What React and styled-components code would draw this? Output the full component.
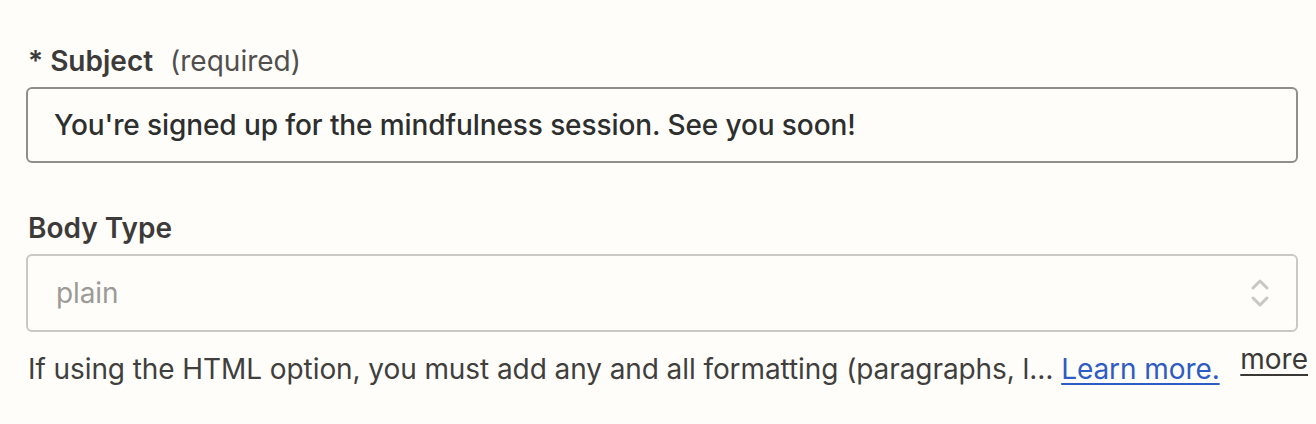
import styled, { createGlobalStyle } from 'styled-components'

const GlobalStyle = createGlobalStyle`
    html, body {
        margin: 0;
        padding: 0;
        background: #fffdf9;
    }
    body {
        font-family: Inter, "Noto Sans", sans-serif;
        -webkit-font-smoothing: antialiased;
    }
`

const Page = styled.div`
    width: 1316px;
    height: 424px;
    box-sizing: border-box;
    padding: 44px 8px 0 26px;
`

const Field = styled.div`
    display: flex;
    flex-direction: column;
    margin-right: ${p => p.$inset ?? 0}px;
    margin-bottom: ${p => p.$gap ?? 0}px;
`

const Label = styled.div`
    display: flex;
    align-items: baseline;
    gap: 17px;
    height: 34px;
    line-height: 34px;
    margin-bottom: 9px;
    padding-left: 2px;
    font-size: 28px;
    font-weight: 600;
    color: #3c3b3a;
`

const Hint = styled.span`
    font-weight: 400;
    color: #504f4d;
`

const TextBox = styled.div`
    box-sizing: border-box;
    height: 76px;
    display: flex;
    align-items: center;
    padding: 0 26px;
    border: 2px solid #8f8e8b;
    border-radius: 6px;
    font-size: 28px;
    font-weight: 500;
    letter-spacing: -0.1px;
    color: #2d2e2e;
`

const SelectBox = styled(TextBox)`
    height: 78px;
    justify-content: space-between;
    border-color: #cac8c4;
    padding: 0 26px 0 28px;
    font-weight: 400;
    color: #9b9a98;
`

const HelpRow = styled.div`
    display: flex;
    align-items: flex-start;
    gap: 20px;
    padding-top: 17px;
    padding-left: 2px;
`

const HelpText = styled.div`
    flex: 1;
    min-width: 0;
    white-space: nowrap;
    font-size: 28px;
    line-height: 40px;
    letter-spacing: -0.08px;
    color: #403f3e;
`

const Link = styled.a`
    color: #2e5bc4;
    text-decoration: underline;
    text-underline-offset: 4px;
    text-decoration-thickness: 2px;
`

const More = styled.a`
    font-size: 28px;
    line-height: 28px;
    margin-top: -4px;
    color: #3a3938;
    text-decoration: underline;
    text-underline-offset: 5px;
    text-decoration-thickness: 2px;
`

const Chevrons = () => (
    <svg width="20" height="32" viewBox="0 0 20 32" fill="none" stroke="#c9c7c3" strokeWidth="3" strokeLinecap="round" strokeLinejoin="round">
        <polyline points="3,11 10,4 17,11" />
        <polyline points="3,21 10,28 17,21" />
    </svg>
)

export default function App() {
    return (
        <>
            <GlobalStyle />
            <Page>
                <Field $gap={48} $inset={10}>
                    <Label>* Subject<Hint>(required)</Hint></Label>
                    <TextBox>You're signed up for the mindfulness session. See you soon!</TextBox>
                </Field>
                <Field $inset={10}>
                    <Label>Body Type</Label>
                    <SelectBox>
                        plain
                        <Chevrons />
                    </SelectBox>
                </Field>
                <HelpRow>
                    <HelpText>
                        If using the HTML option, you must add any and all formatting (paragraphs, l… <Link href="#">Learn more.</Link>
                    </HelpText>
                    <More href="#">more</More>
                </HelpRow>
            </Page>
        </>
    )
}
